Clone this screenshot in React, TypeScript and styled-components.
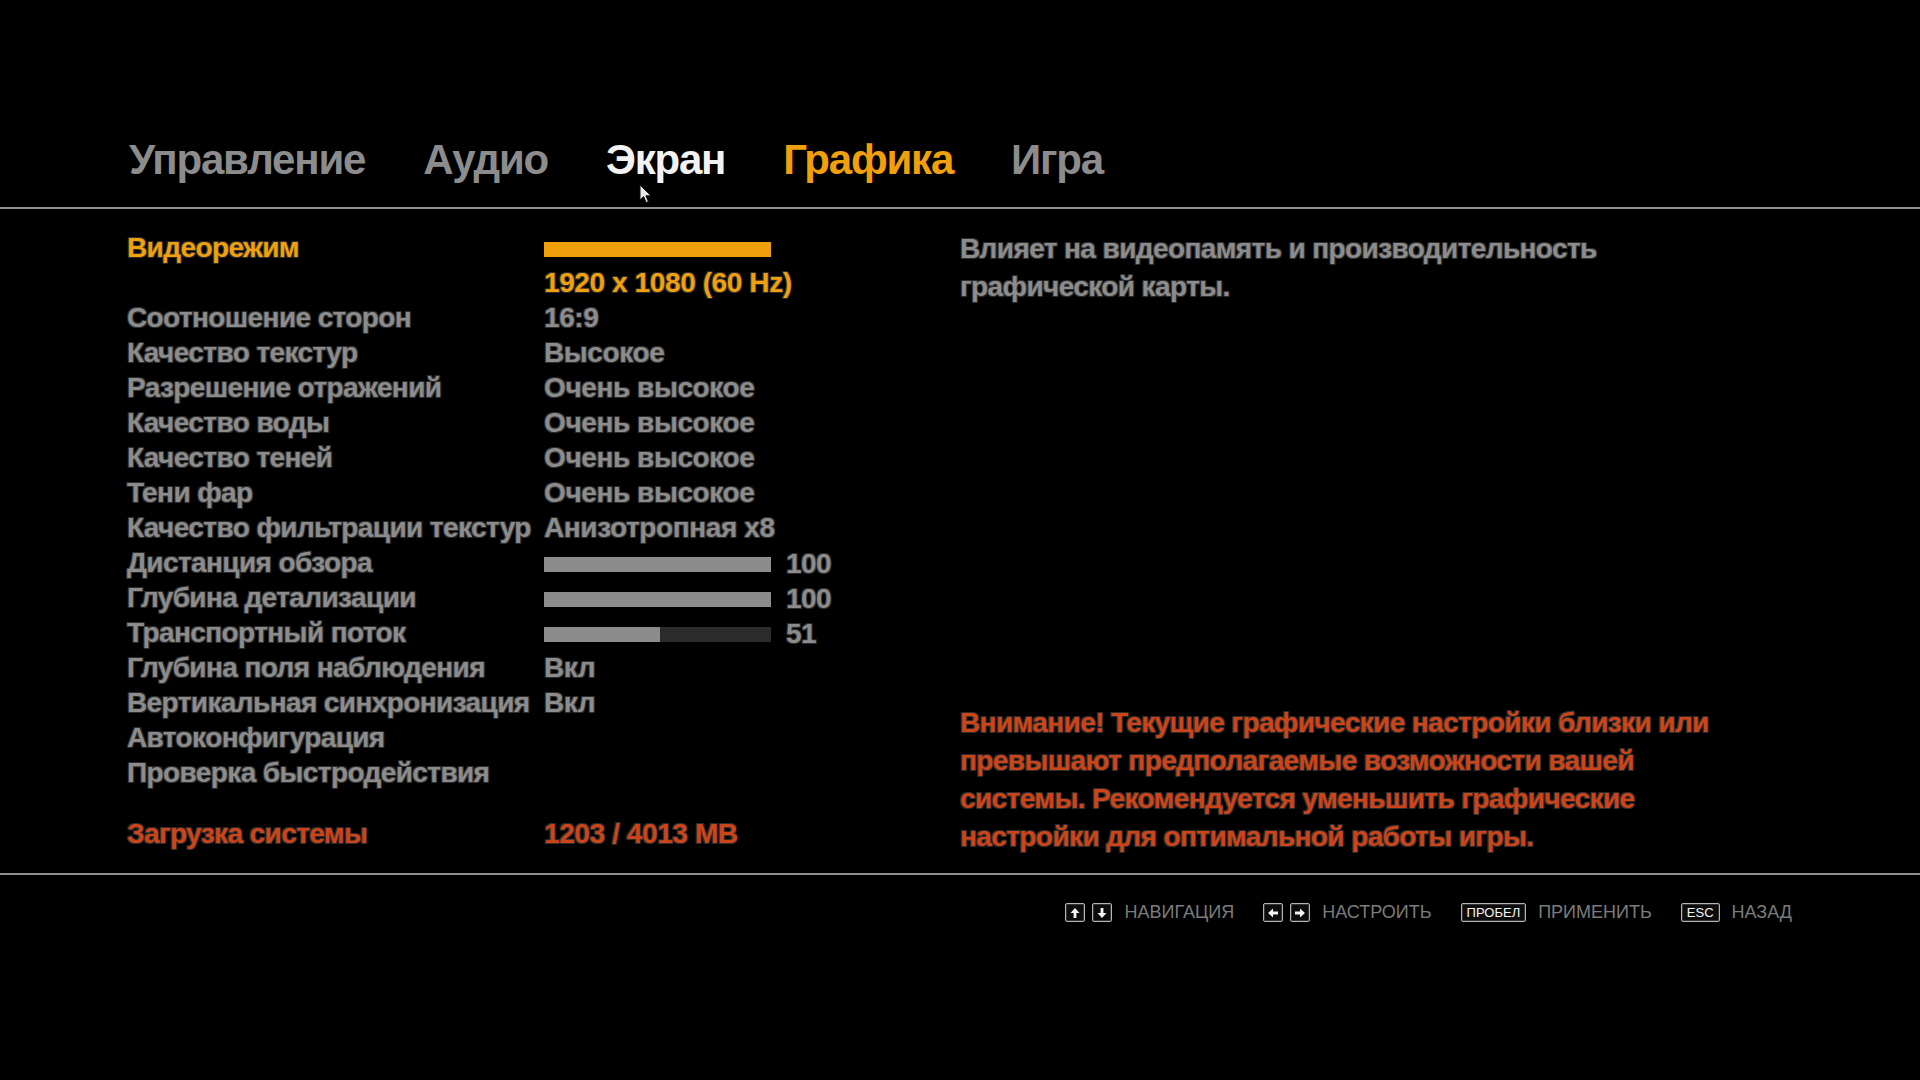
import React from "react";
import styled, { createGlobalStyle, css } from "styled-components";

const GlobalStyle = createGlobalStyle`
  html, body {
    margin: 0;
    padding: 0;
    background: #000;
  }

  body {
    font-family: "Liberation Sans", Arial, "DejaVu Sans", sans-serif;
  }
`;

const GRAY = "#8c8c8c";
const ORANGE = "#f0a00a";
const RED = "#cc4418";

const outline = css`
  text-shadow: -1px -1px 0 #2c2c2c, 1px -1px 0 #2c2c2c, -1px 1px 0 #2c2c2c,
    1px 1px 0 #2c2c2c;
`;

const Screen = styled.div`
  position: relative;
  width: 1920px;
  height: 1080px;
  display: flex;
  flex-direction: column;
  background: #000;
  overflow: hidden;
`;

/* Top tabs */
const TabBar = styled.nav`
  height: 207px;
  box-sizing: border-box;
  display: flex;
  align-items: flex-end;
  gap: 58px;
  padding: 0 0 23px 129px;
`;

type TabProps = {
  $state?: "idle" | "hover" | "active";
};

const Tab = styled.span<TabProps>`
  font-size: 42px;
  line-height: 48px;
  font-weight: 700;
  letter-spacing: -1.2px;
  color: ${({ $state }) =>
    $state === "active" ? ORANGE : $state === "hover" ? "#f2f2f2" : GRAY};
`;

const Divider = styled.div`
  height: 2px;
  background: #8f8f8f;
`;

/* Main settings area */
const Content = styled.main`
  height: 664px;
  box-sizing: border-box;
  display: grid;
  grid-template-columns: 833px 1fr;
  padding: 21px 0 17px 127px;
`;

const SettingsList = styled.div`
  display: flex;
  flex-direction: column;
`;

type RowProps = {
  $gapTop?: boolean;
};

const Row = styled.div<RowProps>`
  display: grid;
  grid-template-columns: 417px 1fr;
  margin-top: ${({ $gapTop }) => ($gapTop ? "26px" : "0")};
`;

type TextProps = {
  $tone?: "gray" | "orange" | "red";
};

const toneColor = (tone?: string) =>
  tone === "orange" ? ORANGE : tone === "red" ? RED : GRAY;

const Label = styled.div<TextProps>`
  height: 35px;
  font-size: 28px;
  line-height: 35px;
  font-weight: 700;
  letter-spacing: -0.6px;
  white-space: nowrap;
  color: ${({ $tone }) => toneColor($tone)};
  ${outline}
`;

const Value = styled(Label)`
  letter-spacing: -0.4px;
`;

const ValueStack = styled.div`
  display: flex;
  flex-direction: column;
`;

const BarCell = styled.div`
  height: 35px;
  display: flex;
  align-items: center;
  gap: 15px;
`;

type TrackProps = {
  $color?: string;
};

const Track = styled.div<TrackProps>`
  position: relative;
  width: 227px;
  height: 15px;
  margin-top: 3px;
  background: #2b2b2b;
  overflow: hidden;
`;

const Fill = styled.div<TrackProps>`
  height: 100%;
  background: ${({ $color }) => $color || GRAY};
`;

const Number = styled(Label)`
  margin-top: 2px;
`;

/* Right info column */
const Info = styled.aside`
  display: flex;
  flex-direction: column;
  justify-content: space-between;
`;

type ParaProps = {
  $tone?: "gray" | "red";
};

const Para = styled.p<ParaProps>`
  margin: 0;
  max-width: 790px;
  font-size: 28px;
  line-height: 38px;
  font-weight: 700;
  letter-spacing: -0.6px;
  color: ${({ $tone }) => toneColor($tone)};
  ${outline}
`;

/* Footer hints */
const Footer = styled.footer`
  flex: 1;
  display: flex;
  justify-content: flex-end;
  align-items: flex-start;
  gap: 29px;
  padding: 28px 128px 0 0;
`;

const Hint = styled.div`
  display: flex;
  align-items: center;
  gap: 12px;
`;

const Keys = styled.div`
  display: flex;
  gap: 7px;
`;

const Key = styled.span`
  box-sizing: border-box;
  min-width: 20px;
  height: 19px;
  padding: 0 5px;
  display: inline-flex;
  align-items: center;
  justify-content: center;
  border: 1px solid #b4b4b4;
  border-radius: 2px;
  background: #0c0c0c;
  color: #f4f4f4;
  font-size: 13px;
  line-height: 1;
  box-shadow: inset 0 0 0 1px #333;
`;

const ArrowKey = styled(Key)`
  padding: 0;
`;

const HintText = styled.span`
  font-size: 18px;
  line-height: 19px;
  color: #7b7b7b;
`;

const Cursor = styled.svg`
  position: absolute;
  left: 639px;
  top: 184px;
`;

type ArrowDir = "up" | "down" | "left" | "right";

const rotation: Record<ArrowDir, number> = {
  up: 0,
  right: 90,
  down: 180,
  left: 270,
};

const Arrow = ({ dir }: { dir: ArrowDir }) => (
  <ArrowKey>
    <svg
      width="12"
      height="12"
      viewBox="0 0 12 12"
      style={{ transform: `rotate(${rotation[dir]}deg)` }}
    >
      <path d="M6 1 L10.5 6 H7.4 V11 H4.6 V6 H1.5 Z" fill="#f4f4f4" />
    </svg>
  </ArrowKey>
);

type Setting = {
  label: string;
  value?: string;
  slider?: number;
};

const settings: Setting[] = [
  { label: "Соотношение сторон", value: "16:9" },
  { label: "Качество текстур", value: "Высокое" },
  { label: "Разрешение отражений", value: "Очень высокое" },
  { label: "Качество воды", value: "Очень высокое" },
  { label: "Качество теней", value: "Очень высокое" },
  { label: "Тени фар", value: "Очень высокое" },
  { label: "Качество фильтрации текстур", value: "Анизотропная x8" },
  { label: "Дистанция обзора", slider: 100 },
  { label: "Глубина детализации", slider: 100 },
  { label: "Транспортный поток", slider: 51 },
  { label: "Глубина поля наблюдения", value: "Вкл" },
  { label: "Вертикальная синхронизация", value: "Вкл" },
  { label: "Автоконфигурация" },
  { label: "Проверка быстродействия" },
];

const tabs: { name: string; state: TabProps["$state"] }[] = [
  { name: "Управление", state: "idle" },
  { name: "Аудио", state: "idle" },
  { name: "Экран", state: "hover" },
  { name: "Графика", state: "active" },
  { name: "Игра", state: "idle" },
];

export default function App(): JSX.Element {
  return (
    <Screen>
      <GlobalStyle />
      <TabBar>
        {tabs.map((t) => (
          <Tab key={t.name} $state={t.state}>
            {t.name}
          </Tab>
        ))}
      </TabBar>
      <Divider />

      <Content>
        <SettingsList>
          <Row>
            <Label $tone="orange">Видеорежим</Label>
            <ValueStack>
              <BarCell>
                <Track>
                  <Fill $color={ORANGE} style={{ width: "100%" }} />
                </Track>
              </BarCell>
              <Value $tone="orange">1920 x 1080 (60 Hz)</Value>
            </ValueStack>
          </Row>

          {settings.map((s) => (
            <Row key={s.label}>
              <Label>{s.label}</Label>
              {s.slider !== undefined ? (
                <BarCell>
                  <Track>
                    <Fill style={{ width: `${s.slider}%` }} />
                  </Track>
                  <Number>{s.slider}</Number>
                </BarCell>
              ) : (
                <Value>{s.value}</Value>
              )}
            </Row>
          ))}

          <Row $gapTop>
            <Label $tone="red">Загрузка системы</Label>
            <Value $tone="red">1203 / 4013 MB</Value>
          </Row>
        </SettingsList>

        <Info>
          <Para>
            Влияет на видеопамять и производительность графической карты.
          </Para>
          <Para $tone="red">
            Внимание! Текущие графические настройки близки или превышают
            предполагаемые возможности вашей системы. Рекомендуется уменьшить
            графические настройки для оптимальной работы игры.
          </Para>
        </Info>
      </Content>

      <Divider />

      <Footer>
        <Hint>
          <Keys>
            <Arrow dir="up" />
            <Arrow dir="down" />
          </Keys>
          <HintText>НАВИГАЦИЯ</HintText>
        </Hint>
        <Hint>
          <Keys>
            <Arrow dir="left" />
            <Arrow dir="right" />
          </Keys>
          <HintText>НАСТРОИТЬ</HintText>
        </Hint>
        <Hint>
          <Key>ПРОБЕЛ</Key>
          <HintText>ПРИМЕНИТЬ</HintText>
        </Hint>
        <Hint>
          <Key>ESC</Key>
          <HintText>НАЗАД</HintText>
        </Hint>
      </Footer>

      <Cursor width="14" height="20" viewBox="0 0 14 20">
        <path
          d="M1 1 L1 16 L4.6 12.6 L7.2 18.6 L9.4 17.6 L6.9 11.8 L12 11.8 Z"
          fill="#e8e8e8"
          stroke="#111"
          strokeWidth="1"
        />
      </Cursor>
    </Screen>
  );
}
